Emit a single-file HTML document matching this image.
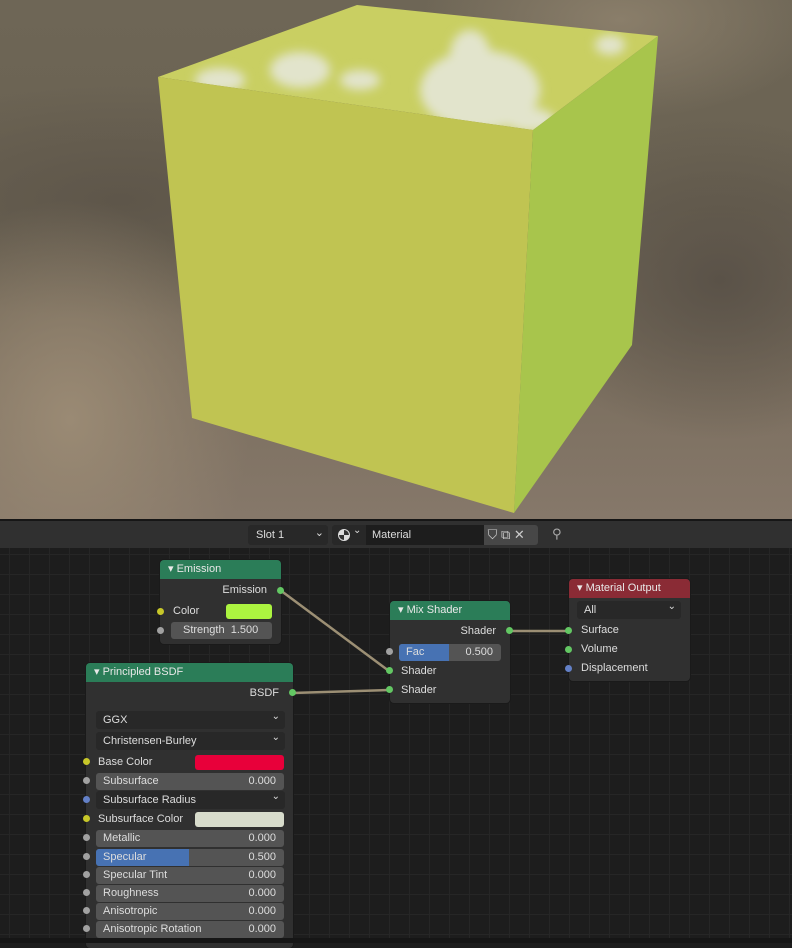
<!DOCTYPE html>
<html><head><style>
*{margin:0;padding:0;box-sizing:border-box}
body{width:792px;height:943px;overflow:hidden;background:#1d1d1d;font-family:"Liberation Sans","DejaVu Sans",sans-serif;font-size:11px;color:#ddd;position:relative}
#vp{position:absolute;left:0;top:0;width:792px;height:519px;background:
radial-gradient(ellipse 180px 220px at 70px 420px,#9a8a74 0%,rgba(154,138,116,0) 100%),
radial-gradient(ellipse 200px 160px at 720px 280px,#5a5248 0%,rgba(90,82,72,0) 100%),
radial-gradient(ellipse 300px 120px at 120px 200px,#5e564a 0%,rgba(94,86,74,0) 100%),
radial-gradient(ellipse 200px 100px at 620px 20px,#8a7e6a 0%,rgba(138,126,106,0) 100%),
linear-gradient(#6e6656,#6a6252 40%,#7a6e5e 70%,#86786a);}
.n{position:absolute;background:#303030;border-radius:4px;box-shadow:0 0 0 1px #1a1a1a}
.h{height:19px;border-radius:4px 4px 0 0;padding-left:8px;line-height:19px;color:#e8e8e8;font-size:11px}
.g{background:#2b7d58}.r{background:#8a2b35}
.row{position:absolute;height:17px;line-height:17px;font-size:11px}
.fld{position:absolute;height:17px;background:#545454;border-radius:3px;line-height:17px;padding:0 7px;font-size:11px;color:#ddd}
.dd{position:absolute;height:18px;background:#282828;border-radius:3px;line-height:18px;padding:0 7px;font-size:11px;color:#ddd}
.dd:after{content:"⌄";position:absolute;right:5px;top:-3px;font-size:10px}
.s{position:absolute;width:7px;height:7px;border-radius:50%}
.sg{background:#63c763}.sy{background:#c7c729}.sw{background:#a1a1a1}.sb{background:#6380c7}
.v{position:absolute;right:8px}
</style></head><body>
<div id="vp">
<svg width="792" height="519" style="position:absolute;left:0;top:0">
<defs>
<clipPath id="tc"><polygon points="158,77 357,5 658,36 533,130"/></clipPath>
<filter id="bl"><feGaussianBlur stdDeviation="5"/></filter>
</defs>
<polygon points="158,77 357,5 658,36 533,130" fill="#c9cf62"/>
<g clip-path="url(#tc)" filter="url(#bl)" fill="#e2e4cc">
<ellipse cx="480" cy="90" rx="60" ry="40"/>
<ellipse cx="470" cy="55" rx="20" ry="25"/>
<ellipse cx="300" cy="70" rx="30" ry="18"/>
<ellipse cx="220" cy="80" rx="25" ry="12"/>
<ellipse cx="360" cy="80" rx="20" ry="10"/>
<ellipse cx="610" cy="45" rx="15" ry="10"/>
<ellipse cx="530" cy="120" rx="25" ry="12"/>
</g>
<polygon points="158,77 533,130 514,513 192,418" fill="#c0c452"/>
<polygon points="533,130 658,36 632,345 514,513" fill="#a8c54c"/>
</svg>
</div>
<div style="position:absolute;left:0;top:519px;width:792px;height:2px;background:#161616"></div>
<div style="position:absolute;left:0;top:521px;width:792px;height:27px;background:#303030"></div>
<div style="position:absolute;left:248px;top:525px;width:80px;height:20px;background:#282828;border-radius:3px;line-height:20px;padding-left:8px;color:#ddd">Slot 1<span style="position:absolute;right:4px;top:-2px">⌄</span></div>
<div style="position:absolute;left:332px;top:525px;width:34px;height:20px;background:#282828;border-radius:3px 0 0 3px"><span style="position:absolute;left:6px;top:4px;width:12px;height:12px;border-radius:50%;background:conic-gradient(#333 0 25%,#ddd 25% 50%,#333 50% 75%,#ddd 75%);border:1px solid #ddd"></span><span style="position:absolute;left:21px;top:0;font-size:10px">⌄</span></div>
<div style="position:absolute;left:366px;top:525px;width:118px;height:20px;background:#1d1d1d;line-height:20px;padding-left:6px;color:#ddd">Material</div>
<div style="position:absolute;left:484px;top:525px;width:54px;height:20px;background:#474747;border-radius:0 3px 3px 0;color:#ccc;font-size:13px;line-height:20px">&nbsp;⛉ ⧉ ✕</div>
<div style="position:absolute;left:552px;top:526px;color:#aaa;font-size:13px">⚲</div>
<div style="position:absolute;left:0;top:548px;width:792px;height:395px;background-color:#1d1d1d;background-image:linear-gradient(#262626 1px,transparent 1px),linear-gradient(90deg,#262626 1px,transparent 1px);background-size:20px 20px;background-position:9px 6px"></div>
<svg width="792" height="943" style="position:absolute;left:0;top:0">
<g stroke="#9c8f74" stroke-width="2.5" fill="none">
<line x1="280" y1="590" x2="389" y2="671"/>
<line x1="292" y1="693" x2="389" y2="690"/>
<line x1="509" y1="631" x2="569" y2="631"/>
</g></svg>
<div class="n" style="left:160px;top:560px;width:121px;height:84px">
<div class="h g">▾ Emission</div>
<div class="row" style="right:14px;top:22px">Emission</div>
<div class="row" style="left:13px;top:43px">Color</div>
<div style="position:absolute;left:66px;top:44px;width:46px;height:15px;background:#acf440;border-radius:3px"></div>
<div class="fld" style="left:11px;top:62px;width:101px;padding-left:12px">Strength&nbsp;&nbsp;1.500</div>
</div>
<div class="s sg" style="left:277px;top:587px"></div>
<div class="s sy" style="left:157px;top:608px"></div>
<div class="s sw" style="left:157px;top:627px"></div>
<div class="n" style="left:390px;top:601px;width:120px;height:102px">
<div class="h g">▾ Mix Shader</div>
<div class="row" style="right:14px;top:22px">Shader</div>
<div class="fld" style="left:9px;top:43px;width:102px;background:#545454"><span style="position:absolute;left:0;top:0;width:50px;height:17px;background:#4772b3;border-radius:3px 0 0 3px"></span><span style="position:relative">Fac</span><span class="v" style="right:8px">0.500</span></div>
<div class="row" style="left:11px;top:62px">Shader</div>
<div class="row" style="left:11px;top:81px">Shader</div>
</div>
<div class="s sg" style="left:506px;top:627px"></div>
<div class="s sw" style="left:386px;top:648px"></div>
<div class="s sg" style="left:386px;top:667px"></div>
<div class="s sg" style="left:386px;top:686px"></div>
<div class="n" style="left:569px;top:579px;width:121px;height:102px">
<div class="h r">▾ Material Output</div>
<div class="dd" style="left:8px;top:22px;width:104px;background:#282828">All</div>
<div class="row" style="left:12px;top:43px">Surface</div>
<div class="row" style="left:12px;top:62px">Volume</div>
<div class="row" style="left:12px;top:81px">Displacement</div>
</div>
<div class="s sg" style="left:565px;top:627px"></div>
<div class="s sg" style="left:565px;top:646px"></div>
<div class="s sb" style="left:565px;top:665px"></div>
<div class="n" style="left:86px;top:663px;width:207px;height:285px">
<div class="h g">▾ Principled BSDF</div>
<div class="row" style="right:14px;top:22px">BSDF</div>
<div class="dd" style="left:10px;top:48px;width:189px">GGX</div>
<div class="dd" style="left:10px;top:69px;width:189px">Christensen-Burley</div>
<div class="row" style="left:12px;top:91px">Base Color</div>
<div style="position:absolute;left:109px;top:92px;width:89px;height:15px;background:#e8003a;border-radius:3px"></div>
<div class="fld" style="left:10px;top:110px;width:188px;padding-left:7px">Subsurface<span class="v">0.000</span></div>
<div class="dd" style="left:10px;top:128px;width:189px">Subsurface Radius</div>
<div class="row" style="left:12px;top:148px">Subsurface Color</div>
<div style="position:absolute;left:109px;top:149px;width:89px;height:15px;background:#d8dccc;border-radius:3px"></div>
<div class="fld" style="left:10px;top:167px;width:188px">Metallic<span class="v">0.000</span></div>
<div class="fld" style="left:10px;top:186px;width:188px"><span style="position:absolute;left:0;top:0;width:93px;height:17px;background:#4772b3;border-radius:3px 0 0 3px"></span><span style="position:relative">Specular</span><span class="v">0.500</span></div>
<div class="fld" style="left:10px;top:204px;width:188px">Specular Tint<span class="v">0.000</span></div>
<div class="fld" style="left:10px;top:222px;width:188px">Roughness<span class="v">0.000</span></div>
<div class="fld" style="left:10px;top:240px;width:188px">Anisotropic<span class="v">0.000</span></div>
<div class="fld" style="left:10px;top:258px;width:188px">Anisotropic Rotation<span class="v">0.000</span></div>
</div>
<div class="s sg" style="left:289px;top:689px"></div>
<div class="s sy" style="left:83px;top:758px"></div>
<div class="s sw" style="left:83px;top:777px"></div>
<div class="s sb" style="left:83px;top:796px"></div>
<div class="s sy" style="left:83px;top:815px"></div>
<div class="s sw" style="left:83px;top:834px"></div>
<div class="s sw" style="left:83px;top:853px"></div>
<div class="s sw" style="left:83px;top:871px"></div>
<div class="s sw" style="left:83px;top:889px"></div>
<div class="s sw" style="left:83px;top:907px"></div>
<div class="s sw" style="left:83px;top:925px"></div>
<div style="position:absolute;left:0;top:938px;width:792px;height:5px;background:#161616"></div>
</body></html>
